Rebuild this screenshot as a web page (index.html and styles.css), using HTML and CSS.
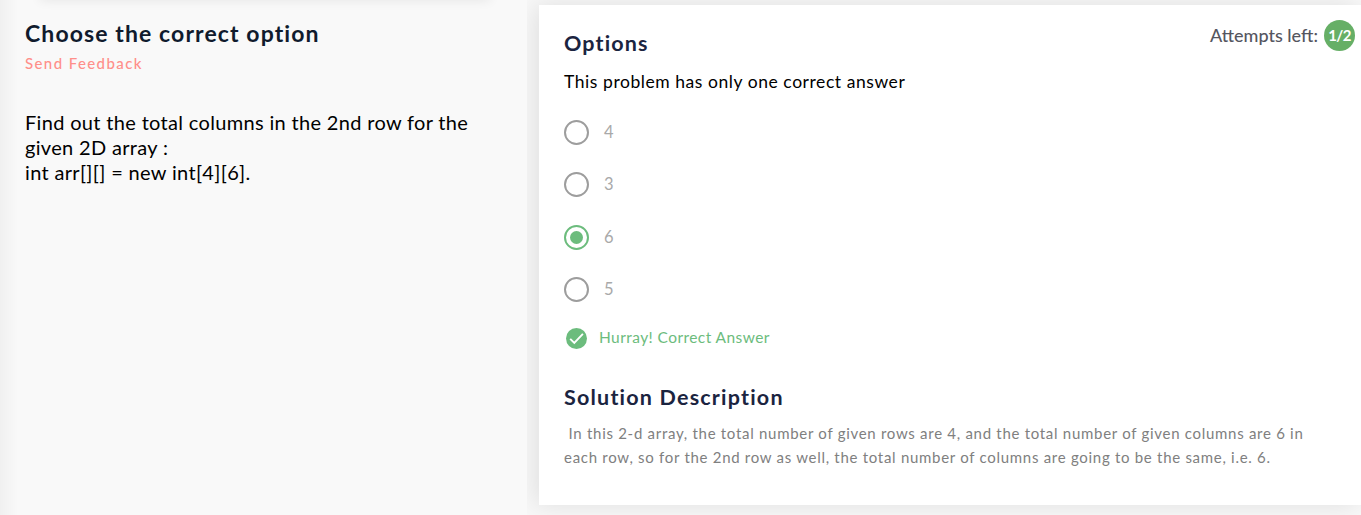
FILE: index.html
```html
<!DOCTYPE html>
<html lang="en">
<head>
<meta charset="utf-8">
<title>Choose the correct option</title>
<link rel="stylesheet" href="styles.css">
</head>
<body>
<main class="page">
  <section class="problem">
    <div class="top-card"></div>
    <h1 class="problem-title">Choose the correct option</h1>
    <a class="feedback">Send Feedback</a>
    <p class="statement">Find out the total columns in the 2nd row for the<br>given 2D array :<br>int arr[][] = new int[4][6].</p>
  </section>
  <section class="answer">
    <header class="answer-head">
      <h2 class="options-title">Options</h2>
      <div class="attempts"><span class="attempts-label">Attempts left:</span><span class="attempts-badge">1/2</span></div>
    </header>
    <p class="hint">This problem has only one correct answer</p>
    <div class="choices">
      <label class="choice"><span class="radio"></span><span class="choice-text">4</span></label>
      <label class="choice"><span class="radio"></span><span class="choice-text">3</span></label>
      <label class="choice"><span class="radio radio-on"></span><span class="choice-text">6</span></label>
      <label class="choice"><span class="radio"></span><span class="choice-text">5</span></label>
    </div>
    <div class="result">
      <svg class="check" viewBox="0 0 21 21"><circle cx="10.5" cy="10.5" r="10.5" fill="#6cbc7d"/><path d="M4.2 10.8l4.1 4.1 8.6-9" fill="none" stroke="#fff" stroke-width="1.9"/></svg>
      <span class="result-text">Hurray! Correct Answer</span>
    </div>
    <h2 class="solution-title">Solution Description</h2>
    <p class="solution">&nbsp;In this 2-d array, the total number of given rows are 4, and the total number of given columns are 6 in<br>each row, so for the 2nd row as well, the total number of columns are going to be the same, i.e. 6.</p>
  </section>
</main>
</body>
</html>
```
FILE: styles.css
```css
* { box-sizing: border-box; }
body { margin: 0; font-family: Lato, sans-serif; background: #f8f8f8; overflow: hidden; }
h1, h2, p { margin: 0; white-space: nowrap; }
.page { display: flex; gap: 12px; width: 1361px; height: 515px; }
.problem { position: relative; z-index: 1; width: 527px; padding: 19px 25px; background: linear-gradient(90deg, #f0f0f0, #f9f9f9 18px); overflow: hidden; }
.top-card { position: absolute; left: 40px; top: -10px; width: 450px; height: 10px; box-shadow: 0 0 12px rgba(0,0,0,.09); }
.problem-title { height: 28px; font-size: 23px; line-height: 28px; font-weight: 700; color: #101b2d; letter-spacing: 1.1px; }
.feedback { display: block; margin-top: 6px; height: 20px; font-size: 15px; line-height: 20px; color: #ff8f8a; letter-spacing: 1.4px; font-weight: 500; }
.statement { margin-top: 37px; font-size: 20px; line-height: 25px; color: #000; letter-spacing: .33px; }
.answer { width: 822px; height: 500px; margin-top: 5px; padding: 15px 6px 0 25px; background: #fff; box-shadow: -4px 0 24px rgba(0,0,0,.1); }
.answer-head { display: flex; justify-content: space-between; height: 49px; }
.options-title { margin-top: 9px; font-size: 21.5px; line-height: 28px; color: #1b2440; letter-spacing: 1.15px; }
.attempts { display: flex; align-items: center; gap: 6px; height: 30px; }
.attempts-label { font-size: 18px; color: #55565f; font-weight: 500; }
.attempts-badge { width: 31px; height: 31px; border-radius: 50%; background: #66af66; color: #fff; font-size: 15px; font-weight: 700; line-height: 31px; text-align: center; letter-spacing: -.7px; }
.hint { height: 26px; font-size: 17.5px; line-height: 26px; color: #000; letter-spacing: .56px; }
.choices { display: grid; grid-template-rows: 25px 25px 25px 25px; row-gap: 27.4px; margin-top: 25px; }
.choice { display: flex; align-items: center; gap: 15px; font-size: 16.5px; line-height: 25px; color: #a9a9a9; }
.choice-text { height: 25px; }
.radio { display: grid; place-items: center; width: 25px; height: 25px; border: 2px solid #9d9d9d; border-radius: 50%; }
.radio-on { border-color: #6cbc7d; }
.radio-on::after { content: ""; width: 13px; height: 13px; border-radius: 50%; background: #6cbc7d; }
.result { display: flex; align-items: center; gap: 12px; margin: 26px 0 0 2px; height: 21px; }
.check { width: 21px; height: 21px; }
.result-text { height: 21px; font-size: 15.5px; line-height: 19px; color: #6cbc7d; letter-spacing: .43px; }
.solution-title { margin-top: 34px; font-size: 21.5px; line-height: 28px; color: #1b2440; letter-spacing: 1.2px; }
.solution { margin-top: 10px; font-size: 15px; line-height: 24px; color: #808080; letter-spacing: .71px; }
```
